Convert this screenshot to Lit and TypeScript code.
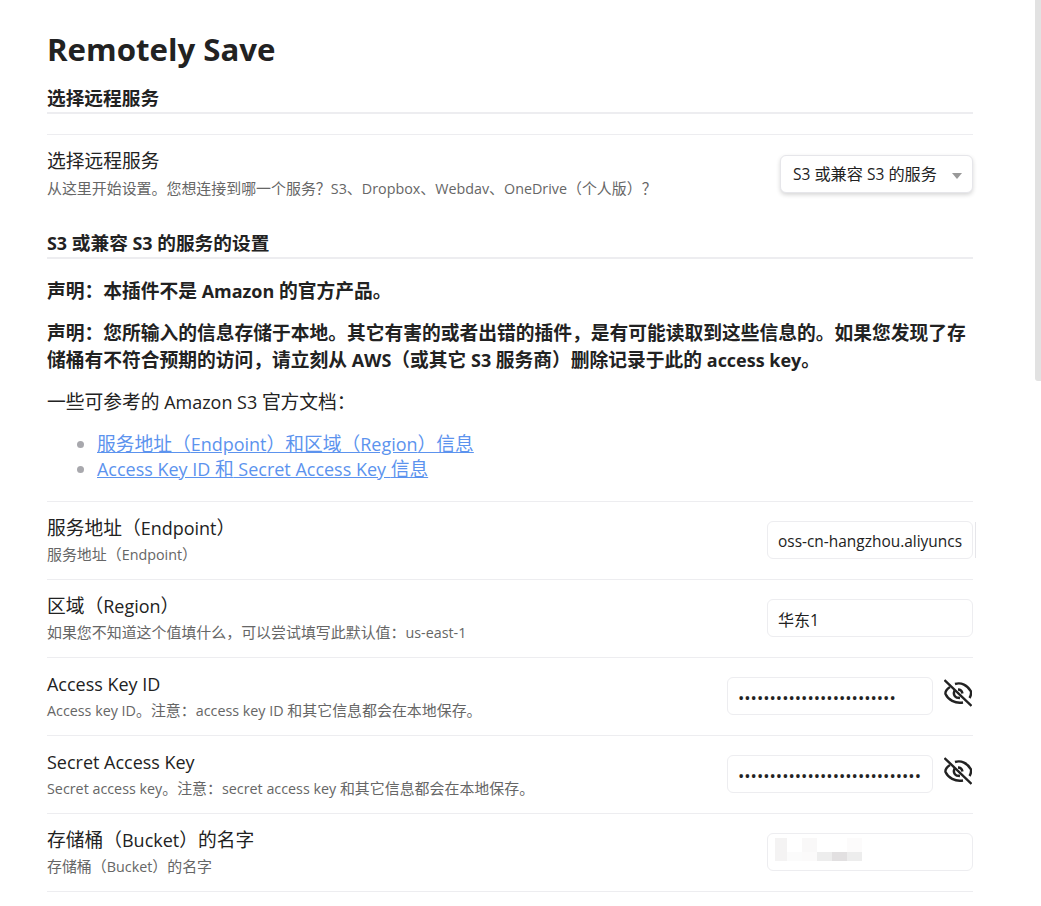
import { LitElement, html, css } from "lit";
import { customElement } from "lit/decorators.js";

const eye = html`<svg class="eye" viewBox="0 0 28 28" fill="none" stroke="#222" stroke-width="2.4" stroke-linecap="butt" stroke-linejoin="round">
  <path d="M0.5 1 L27.5 27"/>
  <path d="M6 8 C3 10 1 12.5 1.5 15 C4 20.5 11 25 19 23.5"/>
  <path d="M11 5 C17 3 23.5 6 27 12.5 C27.3 15 26.5 17.5 25.5 19"/>
  <path d="M10.5 11.5 C9.5 14 10 17 12.5 18.5 L16 19"/>
  <path d="M14 10.5 C16.5 10.5 18 12 18.5 14.5"/>
</svg>`;

/* Latin runs are set slightly smaller, so Open Sans takes up the width of the reference's Latin face. */
const t = (s: string) =>
  s.split(/([\x20-\x7e]+)/).map((part, i) => (i % 2 ? html`<span class="l">${part}</span>` : part));

@customElement("app-root")
export class AppRoot extends LitElement {
  static styles = css`
    :host {
      display: block;
      position: relative;
      height: 906px;
      overflow: hidden;
      background: #fff;
      color: #222;
      font-family: "Open Sans", "Noto Sans CJK SC", sans-serif;
    }
    .l {
      font-size: 0.958em;
      line-height: 1;
    }
    .page {
      padding: 27px 68px 0 47px;
    }
    h1 {
      margin: 0 0 14px;
      font-size: 31.2px;
      line-height: 44px;
      font-weight: 700;
    }
    h3 {
      margin: 0;
      font-size: 18.7px;
      line-height: 26px;
      padding-bottom: 1px;
      font-weight: 700;
      border-bottom: 2px solid #ededf0;
    }
    .row {
      display: flex;
      align-items: center;
      justify-content: space-between;
      height: 77px;
      border-top: 1px solid #ededf0;
    }
    .row.first {
      margin-top: 20px;
      height: 96px;
      align-items: flex-start;
      padding-top: 13px;
      box-sizing: border-box;
    }
    .text {
      margin-top: -2px;
    }
    .first .text {
      margin-top: 0;
    }
    .name {
      font-size: 18.76px;
      line-height: 26px;
      color: #222;
    }
    .desc {
      font-size: 14.95px;
      line-height: 20px;
      color: #666;
      margin-top: 3px;
    }
    .first .desc {
      margin-top: 4px;
    }
    .control {
      display: flex;
      align-items: center;
      gap: 11px;
      position: relative;
      margin-top: -2px;
    }
    .select {
      position: relative;
      width: 193px;
      height: 38px;
      margin-top: 7px;
      box-sizing: border-box;
      border: 1px solid #e6e6ea;
      border-radius: 6px;
      background: #fff;
      box-shadow: 0 2px 4px rgba(0, 0, 0, 0.16);
      padding: 0 12px;
      font-size: 16.2px;
      line-height: 36px;
      color: #222;
      white-space: nowrap;
    }
    .select::after {
      content: "";
      position: absolute;
      right: 10px;
      top: 17px;
      border-left: 5.5px solid transparent;
      border-right: 5.5px solid transparent;
      border-top: 6px solid #999;
    }
    input {
      width: 206px;
      height: 38px;
      box-sizing: border-box;
      margin: 0;
      border: 1px solid #ededf0;
      border-radius: 6px;
      background: #fff;
      padding: 2px 10px 0;
      font: inherit;
      font-size: 15.45px;
      color: #222;
      outline: none;
      display: block;
    }
    input.cjk {
      font-size: 16px;
    }
    input[type="password"] {
      font-size: 16.8px;
      padding-top: 4px;
    }
    .eye {
      width: 28px;
      height: 28px;
      display: block;
      margin-right: 1px;
      margin-top: -6px;
    }
    .sliver {
      position: absolute;
      left: 208px;
      top: 1px;
      width: 1px;
      height: 36px;
      background: #e6e6ea;
    }
    .blur {
      position: absolute;
    }
    .b1 { left: 8px; top: 5px; width: 12px; height: 23px; background: #f4f3f3; }
    .b2 { left: 20px; top: 19px; width: 15px; height: 9px; background: #fbfbfb; }
    .b3 { left: 35px; top: 5px; width: 15px; height: 14px; background: #f9f8f8; }
    .b4 { left: 35px; top: 19px; width: 15px; height: 9px; background: #fbfafa; }
    .b5 { left: 50px; top: 19px; width: 15px; height: 9px; background: #ededed; }
    .b6 { left: 65px; top: 19px; width: 15px; height: 9px; background: #e2e0e1; }
    .b7 { left: 80px; top: 19px; width: 15px; height: 9px; background: #ededed; }
    .b8 { left: 80px; top: 5px; width: 15px; height: 14px; background: #fcfbfb; }
    p {
      margin: 0;
      font-size: 18.76px;
      line-height: 27px;
    }
    p.strong {
      font-weight: 700;
    }
    .p1 { margin-top: 18px; }
    .p2 { margin-top: 15px; }
    .p3 { margin-top: 15px; }
    ul {
      margin: 17px 0 20px;
      padding: 0 0 0 50px;
      font-size: 18.76px;
      line-height: 24.5px;
    }
    li::marker { color: #a8a8ad; }
    a {
      color: #5c93ee;
      text-decoration: underline;
    }
    .thumb {
      position: absolute;
      right: 0;
      top: 0;
      width: 6px;
      height: 381px;
      background: #e2e2e2;
      border-bottom-left-radius: 3px;
    }
  `;

  private renderRow(name: string, desc: string, control: unknown, first = false) {
    return html`<div class="row ${first ? "first" : ""}">
      <div class="text">
        <div class="name">${t(name)}</div>
        <div class="desc">${t(desc)}</div>
      </div>
      ${control}
    </div>`;
  }

  render() {
    return html`
      <div class="page">
        <h1>Remotely Save</h1>
        <h3>选择远程服务</h3>
        ${this.renderRow(
          "选择远程服务",
          "从这里开始设置。您想连接到哪一个服务\uFF1FS3、Dropbox、Webdav、OneDrive\uFF08个人版\uFF09\uFF1F",
          html`<div class="select">${t("S3 或兼容 S3 的服务")}</div>`,
          true
        )}
        <h3>${t("S3 或兼容 S3 的服务的设置")}</h3>
        <p class="strong p1">${t("声明\uFF1A本插件不是 Amazon 的官方产品。")}</p>
        <p class="strong p2">${t("声明\uFF1A您所输入的信息存储于本地。其它有害的或者出错的插件\uFF0C是有可能读取到这些信息的。如果您发现了存储桶有不符合预期的访问\uFF0C请立刻从 AWS\uFF08或其它 S3 服务商\uFF09删除记录于此的 access key。")}</p>
        <p class="p3">${t("一些可参考的 Amazon S3 官方文档\uFF1A")}</p>
        <ul>
          <li><a href="#">${t("服务地址\uFF08Endpoint\uFF09和区域\uFF08Region\uFF09信息")}</a></li>
          <li><a href="#">${t("Access Key ID 和 Secret Access Key 信息")}</a></li>
        </ul>
        ${this.renderRow(
          "服务地址\uFF08Endpoint\uFF09",
          "服务地址\uFF08Endpoint\uFF09",
          html`<div class="control"><input type="text" .value=${"oss-cn-hangzhou.aliyuncs.com"} /><span class="sliver"></span></div>`
        )}
        ${this.renderRow(
          "区域\uFF08Region\uFF09",
          "如果您不知道这个值填什么\uFF0C可以尝试填写此默认值\uFF1Aus-east-1",
          html`<div class="control"><input class="cjk" type="text" .value=${"华东1"} /></div>`
        )}
        ${this.renderRow(
          "Access Key ID",
          "Access key ID。注意\uFF1Aaccess key ID 和其它信息都会在本地保存。",
          html`<div class="control"><input type="password" .value=${"a".repeat(25)} />${eye}</div>`
        )}
        ${this.renderRow(
          "Secret Access Key",
          "Secret access key。注意\uFF1Asecret access key 和其它信息都会在本地保存。",
          html`<div class="control"><input type="password" .value=${"a".repeat(29)} />${eye}</div>`
        )}
        ${this.renderRow(
          "存储桶\uFF08Bucket\uFF09的名字",
          "存储桶\uFF08Bucket\uFF09的名字",
          html`<div class="control"><input type="text" />
            <i class="blur b1"></i><i class="blur b2"></i><i class="blur b3"></i><i class="blur b4"></i>
            <i class="blur b5"></i><i class="blur b6"></i><i class="blur b7"></i><i class="blur b8"></i></div>`
        )}
        <div class="row"></div>
      </div>
      <div class="thumb"></div>
    `;
  }
}
